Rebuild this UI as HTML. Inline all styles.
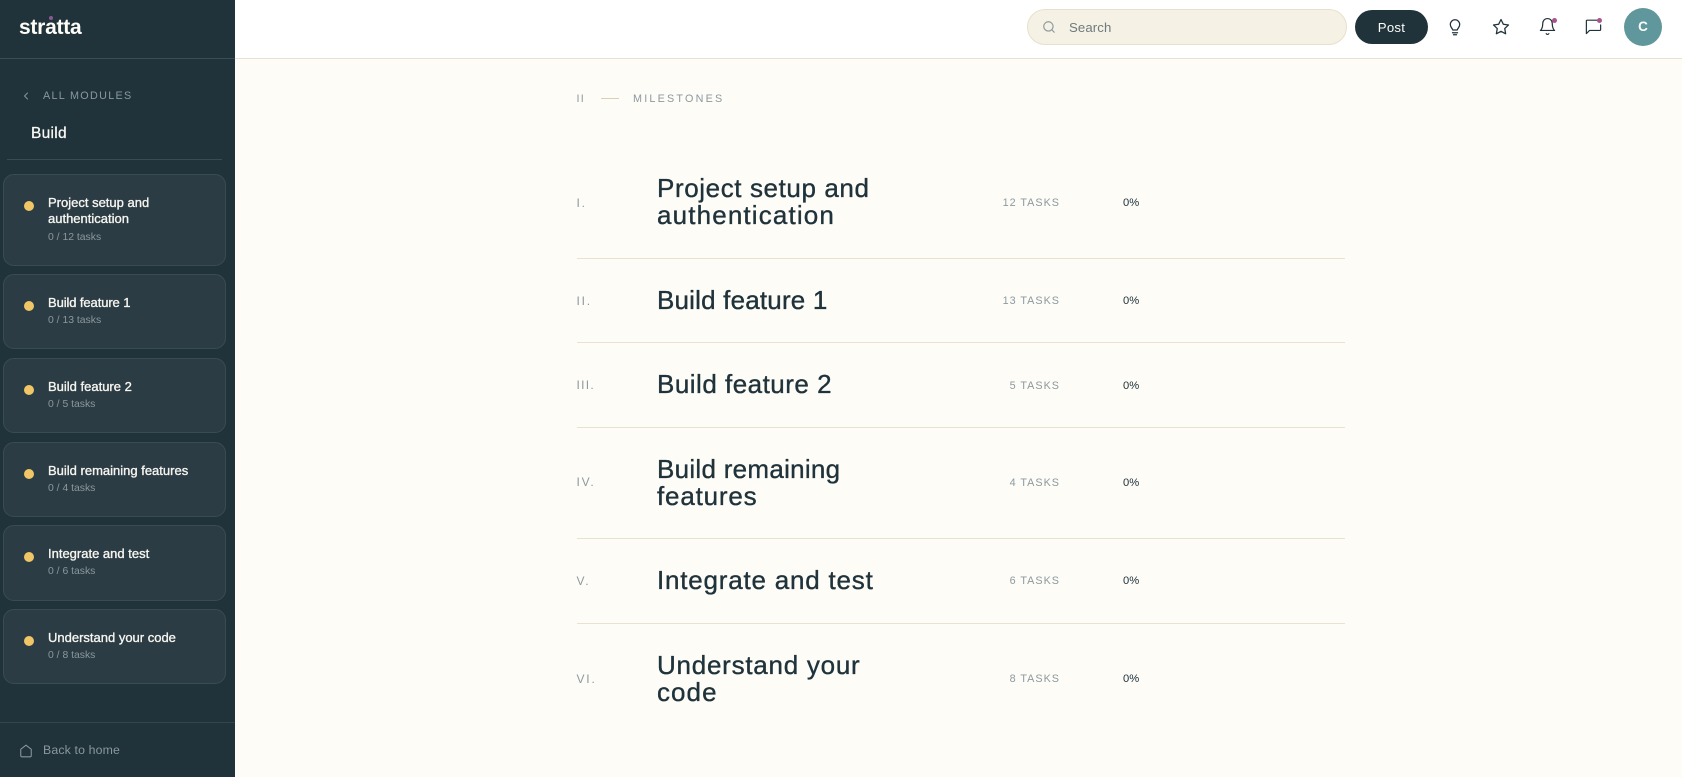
<!DOCTYPE html>
<html lang="en">
<head>
<meta charset="utf-8">
<title>Stratta - Build</title>
<style>
*{box-sizing:border-box;margin:0;padding:0}
html,body{width:1682px;height:777px;overflow:hidden;background:#fdfcf7;font-family:"Liberation Sans",sans-serif}
.a{position:absolute;white-space:nowrap}
#side{position:absolute;left:0;top:0;width:235px;height:777px;background:#20333b}
#top{position:absolute;left:235px;top:0;width:1447px;height:59px;background:#fff;border-bottom:1px solid #e9e2d0}
.card{position:absolute;left:3px;width:223px;background:#2c3c44;border:1px solid #3a4b53;border-radius:11px}
.dot{position:absolute;left:24px;width:10px;height:10px;border-radius:50%;background:#f0c667}
.ct{position:absolute;left:48px;font-size:13px;line-height:16px;color:#f6f5f0;white-space:nowrap;-webkit-text-stroke:.35px #f6f5f0}
.cs{position:absolute;left:48px;font-size:10.4px;line-height:14px;color:#8b989d;white-space:nowrap}
.ln{position:absolute;left:577px;width:768px;height:1px;background:#e8e2cf}
.h{position:absolute;left:657px;font-size:26px;line-height:27px;color:#20333b;white-space:nowrap;letter-spacing:.55px;-webkit-text-stroke:.35px #20333b}
.n{position:absolute;left:576.5px;font-size:12px;line-height:14px;color:#8c999f;letter-spacing:1.8px;white-space:nowrap}
.t{position:absolute;right:622px;font-size:10.8px;line-height:14px;color:#8c999f;letter-spacing:1px;white-space:nowrap}
.p{position:absolute;left:1123px;font-size:11.2px;line-height:14px;color:#20333b;white-space:nowrap}
svg{position:absolute;fill:none;stroke-linecap:round;stroke-linejoin:round}
.pd{position:absolute;width:5px;height:5px;border-radius:50%;background:#a9548f}
</style>
</head>
<body>
<div id="side"></div>
<div class="a" style="left:0;top:58px;width:235px;height:1px;background:#3a4c54"></div>
<div class="a" style="left:19px;top:14px;font-size:21px;line-height:28px;font-weight:700;color:#fdfcf7;letter-spacing:-.25px">stratta</div>
<div class="a" style="left:49px;top:16px;width:4px;height:4px;border-radius:50%;background:#8a5a8f"></div>
<svg style="left:20px;top:90px" width="12" height="12" viewBox="0 0 24 24" stroke="#8b989d" stroke-width="1.9"><path d="m15 18-6-6 6-6"/></svg>
<div class="a" style="left:43px;top:89px;font-size:10.8px;line-height:14px;color:#8b989d;letter-spacing:1.3px">ALL MODULES</div>
<div class="a" style="left:31px;top:125px;font-size:15.5px;line-height:18px;color:#fbfaf5;letter-spacing:.3px;-webkit-text-stroke:.25px #fbfaf5">Build</div>
<div class="a" style="left:7px;top:159px;width:215px;height:1px;background:#3a4b53"></div>

<div class="card" style="top:174px;height:92px"></div>
<div class="dot" style="top:201px"></div>
<div class="ct" style="top:195px">Project setup and</div>
<div class="ct" style="top:211px">authentication</div>
<div class="cs" style="top:231px">0 / 12 tasks</div>

<div class="card" style="top:274px;height:75px"></div>
<div class="dot" style="top:301px"></div>
<div class="ct" style="top:295px;letter-spacing:-.1px">Build feature 1</div>
<div class="cs" style="top:314px">0 / 13 tasks</div>

<div class="card" style="top:358px;height:75px"></div>
<div class="dot" style="top:385px"></div>
<div class="ct" style="top:379px">Build feature 2</div>
<div class="cs" style="top:398px">0 / 5 tasks</div>

<div class="card" style="top:442px;height:75px"></div>
<div class="dot" style="top:469px"></div>
<div class="ct" style="top:463px">Build remaining features</div>
<div class="cs" style="top:482px">0 / 4 tasks</div>

<div class="card" style="top:525px;height:76px"></div>
<div class="dot" style="top:552px"></div>
<div class="ct" style="top:546px">Integrate and test</div>
<div class="cs" style="top:565px">0 / 6 tasks</div>

<div class="card" style="top:609px;height:75px"></div>
<div class="dot" style="top:636px"></div>
<div class="ct" style="top:630px">Understand your code</div>
<div class="cs" style="top:649px">0 / 8 tasks</div>

<div class="a" style="left:0;top:722px;width:235px;height:1px;background:#33454d"></div>
<svg style="left:19px;top:744px" width="14" height="14" viewBox="0 0 24 24" stroke="#8b989d" stroke-width="1.8"><path d="m3 9 9-7 9 7v11a2 2 0 0 1-2 2H5a2 2 0 0 1-2-2z"/></svg>
<div class="a" style="left:43px;top:743px;font-size:12.3px;line-height:15px;color:#8b989d;letter-spacing:.15px">Back to home</div>

<div id="top"></div>
<div class="a" style="left:1027px;top:9px;width:320px;height:36px;border-radius:18px;background:#f5f1e4;border:1px solid #e8e0cc"></div>
<svg style="left:1042px;top:20px" width="14" height="14" viewBox="0 0 24 24" stroke="#8c999f" stroke-width="2"><circle cx="11" cy="11" r="8"/><path d="m21 21-4.3-4.3"/></svg>
<div class="a" style="left:1069px;top:19px;font-size:13.2px;line-height:17px;color:#6f7a7e;letter-spacing:.1px">Search</div>
<div class="a" style="left:1355px;top:10px;width:73px;height:34px;border-radius:17px;background:#20333b;color:#fdfcf7;font-size:13.2px;line-height:35px;text-align:center;letter-spacing:.25px">Post</div>
<svg style="left:1446px;top:16px" width="18" height="22" viewBox="0 0 18 22" stroke="#20333b" stroke-width="1.25"><path d="M6.8 14C6.6 12.5 4.3 11.5 4.3 8.5A4.7 4.7 0 1 1 13.7 8.5C13.7 11.5 11.4 12.5 11.2 14Z"/><path d="M6.5 16.7h5"/><path d="M7.5 18.7h3"/></svg>
<svg style="left:1492px;top:18px" width="18" height="18" viewBox="0 0 24 24" stroke="#20333b" stroke-width="1.7"><polygon points="12 2 15.09 8.26 22 9.27 17 14.14 18.18 21.02 12 17.77 5.82 21.02 7 14.14 2 9.27 8.91 8.26"/></svg>
<svg style="left:1538px;top:17px" width="19" height="19" viewBox="0 0 24 24" stroke="#20333b" stroke-width="1.5"><path d="M6 8a6 6 0 0 1 12 0c0 7 3 9 3 9H3s3-2 3-9"/><path d="M10.3 21a1.94 1.94 0 0 0 3.4 0"/></svg>
<div class="pd" style="left:1551.5px;top:17.5px"></div>
<svg style="left:1584px;top:17px" width="19" height="19" viewBox="0 0 24 24" stroke="#20333b" stroke-width="1.5"><path d="M21 10v6a1 1 0 0 1-1 1H7l-4 4V5a1 1 0 0 1 1-1h13"/></svg>
<div class="pd" style="left:1597px;top:17.5px"></div>
<div class="a" style="left:1624px;top:8px;width:38px;height:38px;border-radius:50%;background:#5f979d;color:#fdfcf7;font-size:13.5px;font-weight:700;line-height:38px;text-align:center">C</div>

<div class="a" style="left:576.5px;top:92px;font-size:10.8px;line-height:14px;color:#8c999f;letter-spacing:1.3px">II</div>
<div class="a" style="left:601px;top:98px;width:18px;height:1px;background:#d9d0b5"></div>
<div class="a" style="left:633px;top:92px;font-size:10.8px;line-height:14px;color:#8c999f;letter-spacing:2.2px">MILESTONES</div>

<div class="n" style="top:196px">I.</div>
<div class="h" style="top:175px"><span style="letter-spacing:.6px">Project setup and</span><br><span style="letter-spacing:1.15px">authentication</span></div>
<div class="t" style="top:196px">12 TASKS</div>
<div class="p" style="top:196px">0%</div>
<div class="ln" style="top:258px"></div>

<div class="n" style="top:294px">II.</div>
<div class="h" style="top:287px;letter-spacing:.19px">Build feature 1</div>
<div class="t" style="top:294px">13 TASKS</div>
<div class="p" style="top:294px">0%</div>
<div class="ln" style="top:342px"></div>

<div class="n" style="top:378px;letter-spacing:1.3px">III.</div>
<div class="h" style="top:371px;letter-spacing:.49px">Build feature 2</div>
<div class="t" style="top:379px">5 TASKS</div>
<div class="p" style="top:379px">0%</div>
<div class="ln" style="top:427px"></div>

<div class="n" style="top:475px">IV.</div>
<div class="h" style="top:456px"><span style="letter-spacing:.28px">Build remaining</span><br><span style="letter-spacing:.82px">features</span></div>
<div class="t" style="top:476px">4 TASKS</div>
<div class="p" style="top:476px">0%</div>
<div class="ln" style="top:538px"></div>

<div class="n" style="top:574px">V.</div>
<div class="h" style="top:567px;letter-spacing:.79px">Integrate and test</div>
<div class="t" style="top:574px">6 TASKS</div>
<div class="p" style="top:574px">0%</div>
<div class="ln" style="top:623px"></div>

<div class="n" style="top:672px">VI.</div>
<div class="h" style="top:652px"><span style="letter-spacing:.75px">Understand your</span><br><span style="letter-spacing:1.05px">code</span></div>
<div class="t" style="top:672px">8 TASKS</div>
<div class="p" style="top:672px">0%</div>
</body>
</html>
